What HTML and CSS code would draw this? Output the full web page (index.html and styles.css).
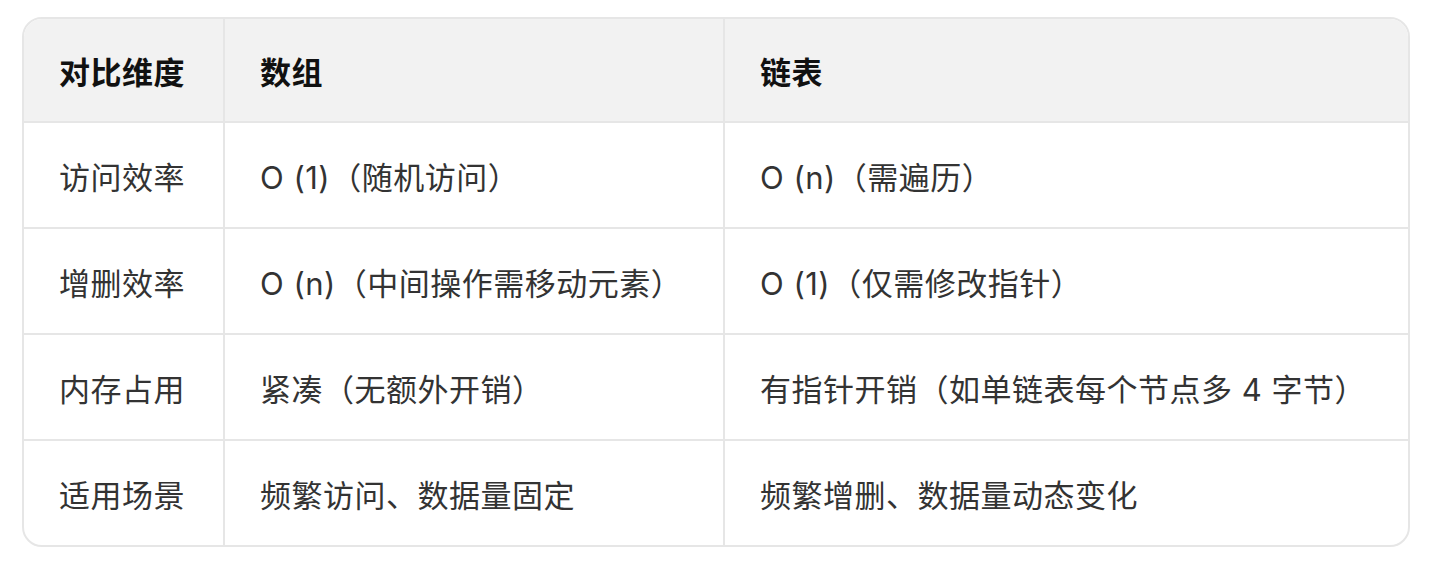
FILE: index.html
```html
<!DOCTYPE html>
<html lang="zh-CN">
<head>
<meta charset="utf-8">
<title>数组与链表对比</title>
<link rel="stylesheet" href="styles.css">
</head>
<body>
<div class="table-wrap">
  <table class="cmp">
    <colgroup>
      <col class="c1"><col class="c2"><col class="c3">
    </colgroup>
    <thead>
      <tr><th>对比维度</th><th>数组</th><th>链表</th></tr>
    </thead>
    <tbody>
      <tr><td>访问效率</td><td>O (1)（随机访问）</td><td>O (n)（需遍历）</td></tr>
      <tr><td>增删效率</td><td>O (n)（中间操作需移动元素）</td><td>O (1)（仅需修改指针）</td></tr>
      <tr><td>内存占用</td><td>紧凑（无额外开销）</td><td>有指针开销（如单链表每个节点多 4 字节）</td></tr>
      <tr><td>适用场景</td><td>频繁访问、数据量固定</td><td>频繁增删、数据量动态变化</td></tr>
    </tbody>
  </table>
</div>
</body>
</html>
```

FILE: styles.css
```css
html, body {
  margin: 0;
  padding: 0;
  background: #ffffff;
}
body {
  padding: 17px 0 0 22px;
  font-family: "Inter", "Noto Sans CJK SC", sans-serif;
}
.table-wrap {
  width: 1388px;
  box-sizing: border-box;
  border: 2px solid #e6e6e6;
  border-radius: 20px;
  overflow: hidden;
}
.cmp {
  width: 100%;
  border-collapse: separate;
  border-spacing: 0;
  table-layout: fixed;
}
.c1 { width: 201px; }
.c2 { width: 500px; }
.c3 { width: auto; }
.cmp th, .cmp td {
  text-align: left;
  vertical-align: middle;
  padding: 0 0 0 35px;
  border-right: 2px solid #e6e6e6;
  border-bottom: 2px solid #e6e6e6;
  font-size: 31px;
  letter-spacing: 0.5px;
  white-space: nowrap;
}
.cmp th:last-child, .cmp td:last-child { border-right: none; }
.cmp tbody tr:last-child td { border-bottom: none; }
.cmp th {
  height: 102px;
  background: #f2f2f2;
  font-weight: 700;
  color: #111111;
}
.cmp td {
  height: 104px;
  color: #333333;
  font-weight: 400;
}
```
